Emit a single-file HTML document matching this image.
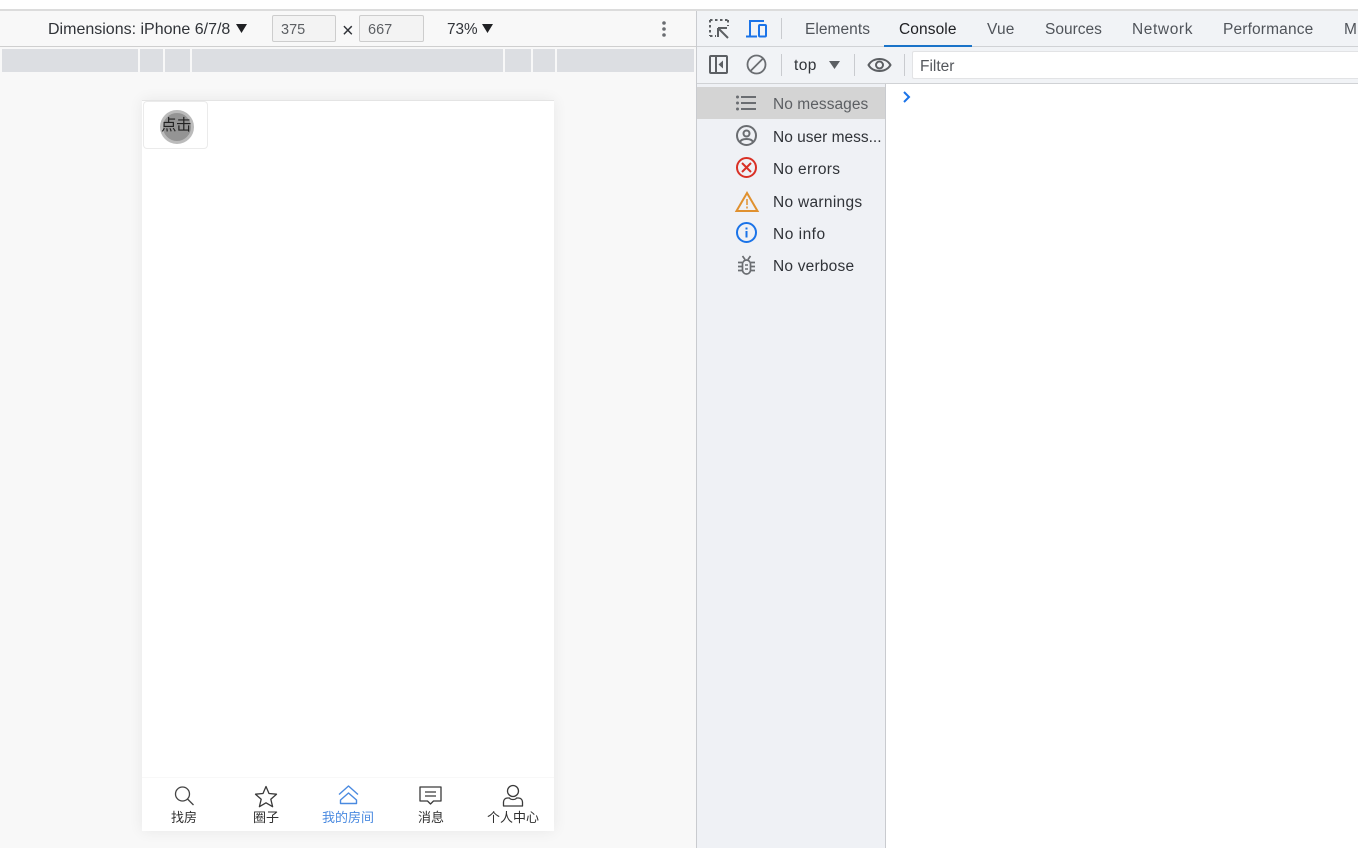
<!DOCTYPE html>
<html><head><meta charset="utf-8"><style>
html,body{margin:0;padding:0;width:1358px;height:848px;overflow:hidden;background:#f8f8f8;font-family:"Liberation Sans","Noto Sans CJK SC",sans-serif;color:#303338}
div,span{position:absolute;box-sizing:border-box}
.t{white-space:nowrap;line-height:20px;font-size:15.5px}
svg{position:absolute;overflow:visible}
.r{background:#dcdee2;top:49px;height:23px}
.lab{font-size:15.5px;color:#303338}
.nav{top:810px;font-size:13px;line-height:16px;white-space:nowrap;color:#303030;transform:translateX(-50%)}
</style></head><body>
<div style="left:0;top:0;width:1358px;height:10px;background:#fff"></div>
<div style="left:0;top:9px;width:1358px;height:2px;background:#dcdcdc"></div>

<!-- device toolbar -->
<div style="left:0;top:11px;width:696px;height:36px;background:#f8f8f8"></div>
<div style="left:0;top:46px;width:696px;height:1px;background:#cfcfcf"></div>
<span class="t" style="left:48px;top:20px;font-size:16px">Dimensions: iPhone 6/7/8</span>
<svg style="left:236px;top:24px" width="11" height="9"><path d="M0 0h11L5.500 9z" fill="#202124"/></svg>
<div style="left:272px;top:15px;width:64px;height:27px;background:#f3f3f3;border:1px solid #cdcdcd;border-radius:2px"></div>
<span class="t" style="left:281px;top:20px;color:#5c5f63;font-size:14.500px">375</span>
<span class="t" style="left:342px;top:21px;font-size:20px">×</span>
<div style="left:359px;top:15px;width:65px;height:27px;background:#f3f3f3;border:1px solid #cdcdcd;border-radius:2px"></div>
<span class="t" style="left:368px;top:20px;color:#5c5f63;font-size:14.500px">667</span>
<span class="t" style="left:447px;top:20px;font-size:15.300px">73%</span>
<svg style="left:482px;top:24px" width="11" height="9"><path d="M0 0h11L5.500 9z" fill="#202124"/></svg>
<svg style="left:661px;top:20px" width="6" height="18" fill="#6a6d71"><circle cx="3" cy="3" r="1.800"/><circle cx="3" cy="9" r="1.800"/><circle cx="3" cy="15" r="1.800"/></svg>

<!-- media query bars -->
<div class="r" style="left:2px;width:136px"></div>
<div class="r" style="left:140px;width:23px"></div>
<div class="r" style="left:165px;width:25px"></div>
<div class="r" style="left:192px;width:311px"></div>
<div class="r" style="left:505px;width:26px"></div>
<div class="r" style="left:533px;width:22px"></div>
<div class="r" style="left:557px;width:137px"></div>

<!-- phone -->
<div style="left:142px;top:100px;width:412px;height:731px;background:#fff;box-shadow:0 0 14px rgba(0,0,0,.07);border-top:1px solid #e4e4e4"></div>
<div style="left:143px;top:101px;width:65px;height:48px;background:#fff;border:1px solid #ebebeb;border-radius:4px"></div>
<div style="left:160px;top:110px;width:34px;height:34px;border-radius:50%;background:#949494;border:3px solid #bbb"></div>
<span style="left:161px;top:117px;font-size:15.500px;line-height:18px;letter-spacing:-.5px;white-space:nowrap;color:#222">点击</span>

<!-- tab bar -->
<div style="left:142px;top:777px;width:412px;height:1px;background:#f8f8f8"></div>
<svg style="left:173px;top:785px" width="24" height="22" fill="none" stroke="#444" stroke-width="1.300"><circle cx="9.500" cy="9" r="7"/><path d="M14.500 14l6 6"/></svg>
<svg style="left:254px;top:785px" width="24" height="23" fill="none" stroke="#3a3a3a" stroke-width="1.300" stroke-linejoin="round"><path d="M12 1.500l3 7 7.500.7-5.700 5 1.800 7.500L12 17.800 5.400 21.700l1.800-7.500-5.700-5 7.500-.7z"/></svg>
<svg style="left:338px;top:785px" width="21" height="20" fill="none" stroke="#4a8ae0" stroke-width="1.400" stroke-linejoin="round"><path d="M1 9.500L10.500 1 20 9.500"/><path d="M2.500 18.500h16v-3.500L10.500 8 2.500 15z"/></svg>
<svg style="left:419px;top:786px" width="23" height="20" fill="none" stroke="#3a3a3a" stroke-width="1.300" stroke-linejoin="round"><path d="M1 1h21v14h-7.500L11.500 18 8.500 15H1z"/><path d="M6 6h11M6 10h11"/></svg>
<svg style="left:502px;top:784px" width="22" height="23" fill="none" stroke="#3a3a3a" stroke-width="1.300" stroke-linejoin="round"><circle cx="11" cy="7" r="5.500"/><path d="M1.500 22v-4c0-2.500 2-4 4-4h2c1 2 6 2 7 0h2c2 0 4 1.500 4 4v4z"/></svg>
<span class="nav" style="left:184px">找房</span>
<span class="nav" style="left:266px">圈子</span>
<span class="nav" style="left:348px;color:#4a8ae0">我的房间</span>
<span class="nav" style="left:431px">消息</span>
<span class="nav" style="left:513px">个人中心</span>

<!-- devtools -->
<div style="left:696px;top:11px;width:662px;height:837px;background:#fff;border-left:1px solid #c9cbcf"></div>
<div style="left:697px;top:11px;width:661px;height:36px;background:#f1f3f6"></div>
<div style="left:697px;top:46px;width:661px;height:1px;background:#d0d2d5"></div>
<div style="left:697px;top:47px;width:661px;height:36px;background:#f1f3f6"></div>
<div style="left:697px;top:83px;width:661px;height:1px;background:#d0d2d5"></div>

<svg style="left:708px;top:18px" width="22" height="22" fill="none" stroke="#5c5f63" stroke-width="2"><path d="M2 2h18M2 2v16" stroke-dasharray="2.500 2.500"/><path d="M2 18h6M20 2v6" stroke-dasharray="2.500 2.500"/><path d="M10 10h9M10 10v9M10.500 10.500L20 20"/></svg>
<svg style="left:746px;top:19px" width="22" height="20" fill="none" stroke="#1a73e8" stroke-width="2"><path d="M4 17V2h14"/><path d="M0 17.500h11"/><rect x="13" y="6" width="7" height="11.500" rx="1"/></svg>
<div style="left:781px;top:18px;width:1px;height:21px;background:#c9cbcf"></div>
<span class="t" style="left:805px;top:20px;color:#50545a;letter-spacing:.05px">Elements</span>
<span class="t" style="left:899px;top:20px;color:#202124;letter-spacing:.1px">Console</span>
<span class="t" style="left:987px;top:20px;color:#50545a;letter-spacing:.2px">Vue</span>
<span class="t" style="left:1045px;top:20px;color:#50545a;letter-spacing:0">Sources</span>
<span class="t" style="left:1132px;top:20px;color:#50545a;letter-spacing:.6px">Network</span>
<span class="t" style="left:1223px;top:20px;color:#50545a;letter-spacing:.15px">Performance</span>
<span class="t" style="left:1344px;top:20px;color:#50545a">M</span>
<div style="left:884px;top:45px;width:88px;height:2px;background:#1a73c8"></div>

<svg style="left:708px;top:54px" width="21" height="21" fill="none" stroke="#5c5f63" stroke-width="2"><rect x="2" y="2" width="17" height="17" rx="1"/><path d="M8 2v17"/><path d="M15 6.500v8l-4.500-4z" fill="#5c5f63" stroke="none"/></svg>
<svg style="left:746px;top:54px" width="21" height="21" fill="none" stroke="#6a6d71" stroke-width="1.800"><circle cx="10.500" cy="10.500" r="9"/><path d="M4.500 17L17 4.500"/></svg>
<div style="left:781px;top:54px;width:1px;height:22px;background:#c9cbcf"></div>
<span class="t" style="left:794px;top:56px;color:#303338;letter-spacing:.4px">top</span>
<svg style="left:829px;top:61px" width="11" height="8"><path d="M0 0h11L5.500 8z" fill="#5c5f63"/></svg>
<div style="left:854px;top:54px;width:1px;height:22px;background:#c9cbcf"></div>
<svg style="left:867px;top:56px" width="25" height="18" fill="none" stroke="#5c5f63" stroke-width="2"><path d="M1.500 9C6 1 19 1 23.500 9 19 17 6 17 1.500 9z"/><circle cx="12.500" cy="9" r="3.500"/></svg>
<div style="left:904px;top:54px;width:1px;height:22px;background:#c9cbcf"></div>
<div style="left:912px;top:51px;width:446px;height:28px;background:#fff;border:1px solid #e2e3e5;border-right:0;border-radius:2px 0 0 2px"></div>
<span class="t" style="left:920px;top:57px;color:#54575c">Filter</span>

<!-- sidebar -->
<div style="left:697px;top:84px;width:188px;height:764px;background:#eff1f5"></div>
<div style="left:885px;top:84px;width:1px;height:764px;background:#c9cbcf"></div>
<div style="left:697px;top:87px;width:188px;height:32px;background:#d4d4d4"></div>

<svg style="left:736px;top:95px" width="21" height="16" fill="#6a6d71"><circle cx="1.500" cy="2" r="1.500"/><circle cx="1.500" cy="8" r="1.500"/><circle cx="1.500" cy="14" r="1.500"/><rect x="5" y="1" width="15" height="2"/><rect x="5" y="7" width="15" height="2"/><rect x="5" y="13" width="15" height="2"/></svg>
<svg style="left:736px;top:125px" width="21" height="21" fill="none" stroke="#6a6d71" stroke-width="2"><circle cx="10.500" cy="10.500" r="9.500"/><circle cx="10.500" cy="8.500" r="3"/><path d="M4 17c1.500-4 11.500-4 13 0"/></svg>
<svg style="left:736px;top:157px" width="21" height="21" fill="none" stroke="#d93025" stroke-width="2"><circle cx="10.500" cy="10.500" r="9.500"/><path d="M6 6l9 9M15 6l-9 9"/></svg>
<svg style="left:735px;top:191px" width="24" height="21" fill="none" stroke="#e0912f" stroke-width="2"><path d="M12 2L1.500 20h21z" stroke-linejoin="miter"/><path d="M12 8v6M12 15.500v2" stroke-width="1.500"/></svg>
<svg style="left:736px;top:222px" width="21" height="21" fill="none" stroke="#1a73e8" stroke-width="2"><circle cx="10.500" cy="10.500" r="9.500"/><path d="M10.500 9v6.500M10.500 5.500v2"/></svg>
<svg style="left:738px;top:255px" width="17" height="20" fill="none" stroke="#6a6d71" stroke-width="1.700"><path d="M4.500 1l2.500 3.500M12.500 1l-2.500 3.500"/><rect x="4.500" y="5" width="8" height="14" rx="4"/><path d="M0 7.500h4M0 11.500h4M0 15.500h4M13 7.500h4M13 11.500h4M13 15.500h4"/><path d="M7 10h3M7 14h3" stroke-width="1.500"/></svg>

<span class="t lab" style="left:773px;top:95px;color:#5c5f63;letter-spacing:.05px">No messages</span>
<span class="t lab" style="left:773px;top:128px;letter-spacing:0">No user mess...</span>
<span class="t lab" style="left:773px;top:160px;letter-spacing:.3px">No errors</span>
<span class="t lab" style="left:773px;top:193px;letter-spacing:.3px">No warnings</span>
<span class="t lab" style="left:773px;top:225px;letter-spacing:.5px">No info</span>
<span class="t lab" style="left:773px;top:257px;letter-spacing:.2px">No verbose</span>

<svg style="left:902px;top:91px" width="9" height="12" fill="none" stroke="#1a73e8" stroke-width="2"><path d="M2 1l5 5-5 5"/></svg>
</body></html>
